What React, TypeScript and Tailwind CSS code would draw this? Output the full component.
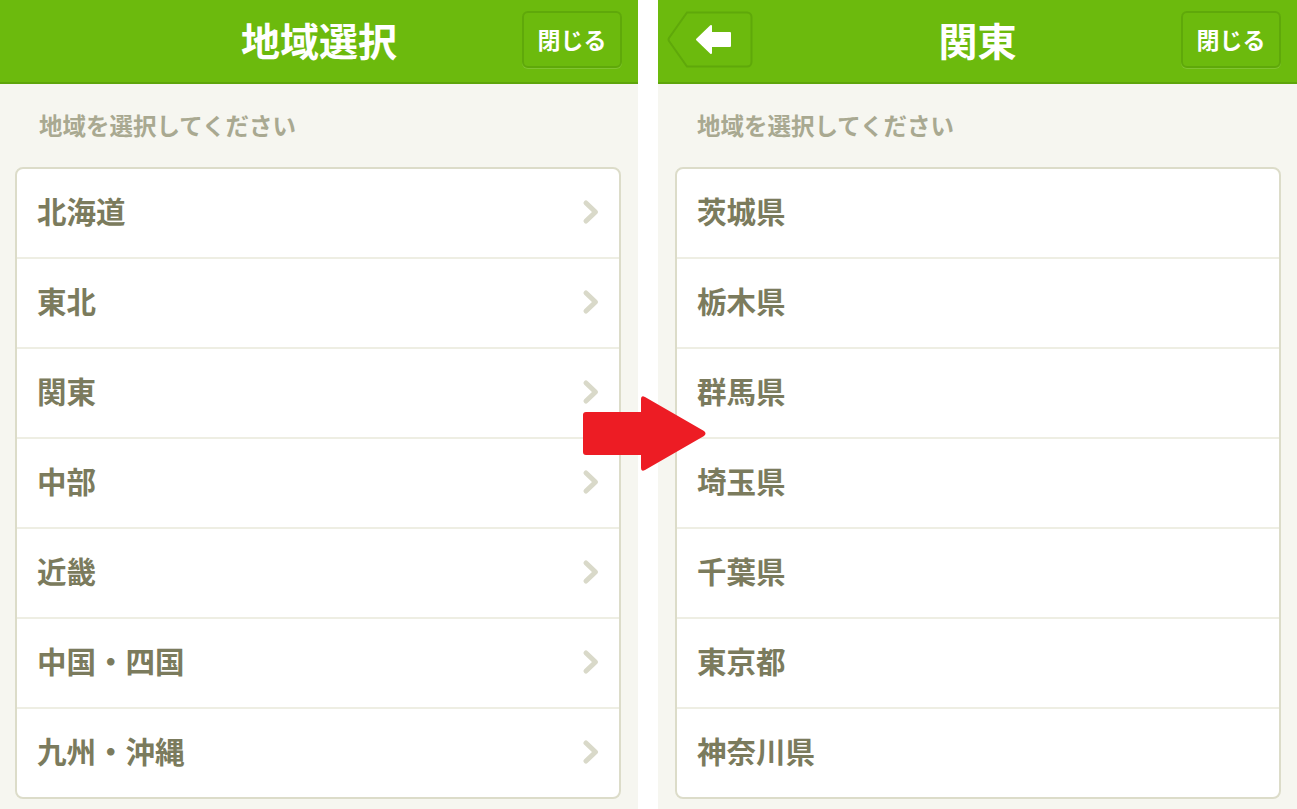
import React from 'react';

const font = { fontFamily: '"Noto Sans CJK JP", "Noto Sans", sans-serif' };

const regions = ['北海道', '東北', '関東', '中部', '近畿', '中国・四国', '九州・沖縄'];
const prefectures = ['茨城県', '栃木県', '群馬県', '埼玉県', '千葉県', '東京都', '神奈川県'];

function CloseButton() {
  return (
    <button className="absolute right-[16px] top-[11px] flex h-[57px] w-[100px] items-center justify-center rounded-[6px] border-2 border-[#5fa80a] bg-[#6cba0d] text-[23px] font-bold leading-none text-white shadow-[0_1px_0_rgba(255,255,255,0.15)]">
      閉じる
    </button>
  );
}

function BackButton() {
  return (
    <button className="absolute left-[9px] top-[11px] h-[57px] w-[86px]">
      <svg width="86" height="57" viewBox="0 0 86 57" className="absolute inset-0">
        <path
          d="M20 1.5 H80 a4.5 4.5 0 0 1 4.5 4.5 V51 a4.5 4.5 0 0 1 -4.5 4.5 H20 L2 30 a3 3 0 0 1 0 -3 Z"
          fill="#6cba0d"
          stroke="#5fa80a"
          strokeWidth="2"
        />
        <path d="M30 28.5 L44 15 V22 H63 V35 H44 V42 Z" fill="#fff" strokeLinejoin="round" stroke="#fff" strokeWidth="2" />
      </svg>
    </button>
  );
}

function Chevron() {
  return (
    <svg width="20" height="26" viewBox="0 0 20 26" className="mt-[4px] shrink-0">
      <path d="M5 4 L14.5 13 L5 22" fill="none" stroke="#d9d9c9" strokeWidth="5" strokeLinecap="round" strokeLinejoin="round" />
    </svg>
  );
}

function Panel({
  title,
  items,
  back,
  chevron,
  cardClass,
  widthClass,
}: {
  title: string;
  items: string[];
  back?: boolean;
  chevron?: boolean;
  cardClass: string;
  widthClass: string;
}) {
  return (
    <div className={`flex h-full flex-col bg-[#f6f6f0] ${widthClass}`}>
      <div className="relative flex h-[84px] shrink-0 items-center justify-center border-b-2 border-[#5ea50b] bg-[#6cba0d] pb-[4px]">
        {back && <BackButton />}
        <h1 className="text-[39px] font-bold leading-none text-white">{title}</h1>
        <CloseButton />
      </div>
      <p className="px-[39px] pt-[27px] text-[23.5px] font-bold leading-[28px] text-[#a9a991]">地域を選択してください</p>
      <div className={`mt-[28px] overflow-hidden rounded-[8px] border-2 border-[#dcdcc9] bg-white ${cardClass}`}>
        {items.map((item, i) => (
          <div
            key={item}
            className={`flex items-center justify-between pb-[6px] pl-[20px] pr-[18px] ${i > 0 ? 'h-[90px] border-t-2 border-[#eeeee3]' : 'h-[88px]'}`}
          >
            <span className="text-[29.5px] font-bold text-[#7b7b5d]">{item}</span>
            {chevron && <Chevron />}
          </div>
        ))}
      </div>
    </div>
  );
}

export default function App() {
  return (
    <div className="relative flex h-[809px] w-[1297px] gap-[20px] overflow-hidden bg-white" style={font}>
      <Panel title="地域選択" items={regions} chevron widthClass="w-[638px]" cardClass="ml-[15px] mr-[17px]" />
      <Panel title="関東" items={prefectures} back widthClass="flex-1" cardClass="ml-[17px] mr-[16px]" />
      {/* red transition arrow */}
      <svg width="126" height="78" viewBox="0 0 126 78" className="absolute left-[582px] top-[395px]">
        <path
          d="M4 17 H59 V4 Q59 0 63 2 L122 36 Q125 38.5 122 41 L63 75 Q59 77 59 73 V60 H4 Q1 60 1 57 V20 Q1 17 4 17 Z"
          fill="#ed1c24"
        />
      </svg>
    </div>
  );
}
